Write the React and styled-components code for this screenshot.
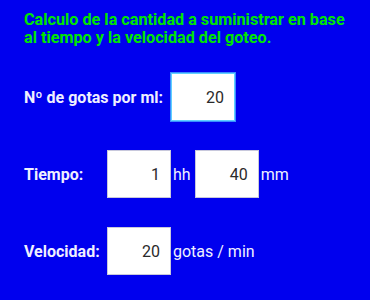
import React from "react";
import styled, { createGlobalStyle } from "styled-components";

const GlobalStyle = createGlobalStyle`
  html, body {
    margin: 0;
    padding: 0;
    background: #0000ee;
  }
  body {
    font-family: Roboto, "Liberation Sans", sans-serif;
  }
`;

const Screen = styled.div`
  width: 370px;
  height: 300px;
  background: #0000ee;
  padding: 11px 0 0 24px;
  box-sizing: border-box;
`;

const Title = styled.h1`
  margin: 0 0 26px 0;
  font-size: 16.2px;
  line-height: 18px;
  font-weight: 700;
  color: #00e600;
`;

const Row = styled.div`
  display: flex;
  align-items: center;
  height: 48px;
  margin-bottom: 29px;
`;

const Label = styled.label`
  font-size: 16px;
  font-weight: 700;
  color: #f0f0ff;
  width: ${({ $width }) => ($width ? `${$width}px` : "auto")};
  margin-right: ${({ $gap }) => ($gap ? `${$gap}px` : "0")};
  flex-shrink: 0;
`;

const Field = styled.input`
  width: 64px;
  height: 48px;
  box-sizing: border-box;
  border: 1px solid ${({ $focused }) => ($focused ? "#5fd0ff" : "#c8c8dc")};
  box-shadow: ${({ $focused }) => ($focused ? "0 0 0 1px #3a8cff" : "none")};
  background: #ffffff;
  text-align: right;
  padding: 0 10px 0 4px;
  font-family: Roboto, "Liberation Sans", sans-serif;
  font-size: 16px;
  color: #2a2a2a;
  outline: none;
`;

const Unit = styled.span`
  font-size: 16px;
  color: #f0f0ff;
  margin: 0 ${({ $right }) => $right || 0}px 0 2px;
`;

export default function App() {
  return (
    <Screen>
      <GlobalStyle />
      <Title>
        Calculo de la cantidad a suministrar en base
        <br />
        al tiempo y la velocidad del goteo.
      </Title>

      <Row>
        <Label $gap={8}>Nº de gotas por ml:</Label>
        <Field $focused defaultValue="20" />
      </Row>

      <Row>
        <Label $width={83}>Tiempo:</Label>
        <Field defaultValue="1" />
        <Unit $right={4}>hh</Unit>
        <Field defaultValue="40" />
        <Unit>mm</Unit>
      </Row>

      <Row>
        <Label $width={83}>Velocidad:</Label>
        <Field defaultValue="20" />
        <Unit>gotas / min</Unit>
      </Row>
    </Screen>
  );
}
